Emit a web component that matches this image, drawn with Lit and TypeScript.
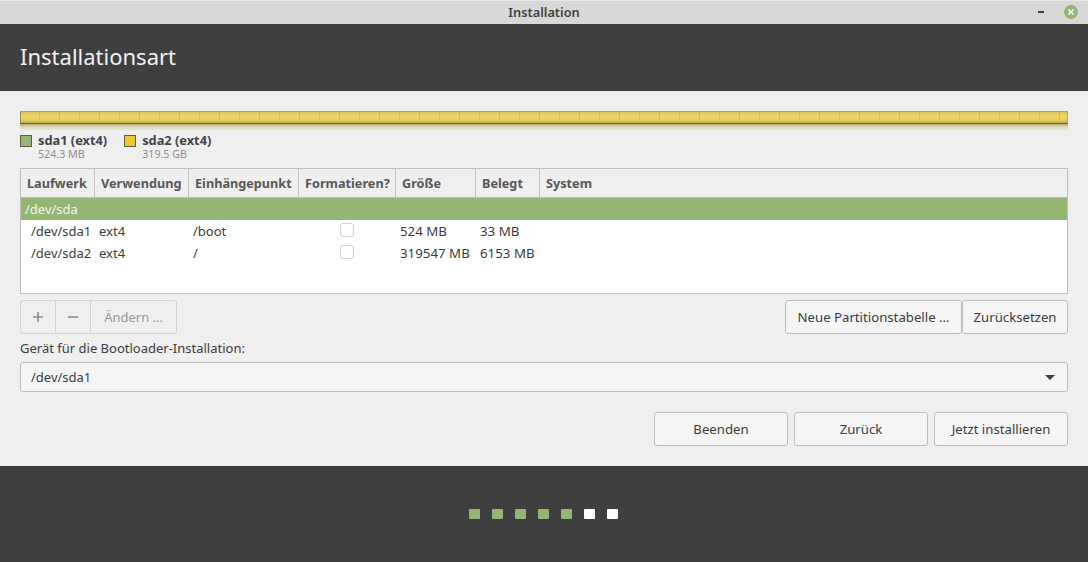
import { LitElement, html, css } from "lit";
import { customElement } from "lit/decorators.js";

const FONT = css`"Noto Sans", "Open Sans", sans-serif`;

@customElement("app-root")
export class AppRoot extends LitElement {
  static styles = css`
    :host { display: block; width: 1088px; height: 562px; overflow: hidden; font-family: ${FONT}; font-size: 13px; color: #3c3c3c; background: #efefef; }
    * { box-sizing: border-box; }
    .titlebar { height: 24px; background: #d8d8d8; border-top: 1px solid #e8e8e8; display: flex; align-items: center; justify-content: center; position: relative; font-weight: 600; font-size: 12.8px; color: #404040; padding-bottom: 1px; }
    .wm { position: absolute; top: 0; left: 0; right: 0; height: 23px; }
    .min { position: absolute; left: 1038px; top: 10px; width: 6px; height: 2px; background: #3f3f3f; }
    .close { position: absolute; left: 1064px; top: 4px; }
    .header { height: 67px; background: #3f3f3f; color: #f2f2f2; font-size: 22px; padding: 0 20px 3px; display: flex; align-items: center; }
    .main { height: 375px; padding: 20px 20px 0; display: flex; flex-direction: column; }
    .bar { height: 13px; border-top: 1px solid #b3a144; border-bottom: 1px solid #6f6428; border-right: 1px solid #b3a144; background-image: linear-gradient(90deg, #7f9a5e 0 1px, transparent 1px), repeating-linear-gradient(90deg, transparent 0 19px, #cfba58 19px 20px), linear-gradient(#dcc557, #efd768 45%, #e0c95c 80%, #bfa94a); }
    .reflect { height: 7px; background: linear-gradient(#b8aa68, #d9d4b0 35%, #efefef); }
    .legend { display: flex; gap: 17px; margin-top: 1px; }
    .lg { display: flex; gap: 6px; }
    .sw { width: 12px; height: 12px; border: 1px solid #5c5c4a; margin-top: 3px; }
    .sw.g { background: #95b574; }
    .sw.y { background: #edca2f; }
    .lg b { display: block; font-size: 12.8px; font-weight: 700; line-height: 16px; color: #3f4450; }
    .lg small { display: block; font-size: 10.7px; line-height: 13px; color: #8e8e8e; }
    .table { margin-top: 7px; height: 126px; background: #fff; border: 1px solid #bdbdbd; }
    .thead { display: flex; height: 29px; background: #efefef; border-bottom: 1px solid #bdbdbd; }
    .th { font-weight: 700; font-size: 12.7px; color: #57575a; padding-left: 6px; line-height: 29px; border-right: 1px solid #c4c4c4; white-space: nowrap; overflow: hidden; }
    .th:last-child { border-right: 0; flex: 1; }
    .group { height: 22px; background: #95b574; color: #f2f6ec; padding-left: 4px; line-height: 22px; }
    .row { position: relative; height: 22px; line-height: 22px; white-space: nowrap; }
    .cell { position: absolute; top: 0; }
    .num { font-size: 13.3px; }
    .check { position: absolute; left: 319px; top: 3px; width: 14px; height: 14px; border: 1px solid #d0d0d0; border-radius: 3px; background: #fff; }
    .actions { display: flex; margin-top: 6px; height: 34px; }
    .btn { height: 34px; border: 1px solid #bdbdbd; border-radius: 3px; background: #f5f5f5; display: flex; align-items: center; justify-content: center; color: #3c3c3c; white-space: nowrap; font-size: 13.2px; }
    .seg { display: flex; height: 34px; border: 1px solid #d3d3d3; border-radius: 3px; color: #999; }
    .seg div { display: flex; align-items: center; justify-content: center; border-right: 1px solid #d3d3d3; }
    .seg div:last-child { border-right: 0; }
    .seg svg { display: block; }
    .spacer { flex: 1; }
    .label { margin-top: 5px; line-height: 18px; color: #3c3c3c; }
    .combo { margin-top: 5px; height: 30px; border: 1px solid #bdbdbd; border-radius: 3px; background: #f5f5f5; display: flex; align-items: center; justify-content: space-between; padding: 0 12px 0 10px; }
    .bottom { display: flex; justify-content: flex-end; gap: 6px; margin-top: 20px; }
    .footer { height: 96px; background: #3f3f3f; display: flex; justify-content: center; gap: 12px; padding: 43px 1px 0 0; }
    .dot { width: 11px; height: 10px; border-radius: 1px; background: #95b574; }
    .dot.w { background: #fff; }
  `;

  render() {
    const cols: [string, number][] = [["Laufwerk", 74], ["Verwendung", 94], ["Einhängepunkt", 110], ["Formatieren?", 97], ["Größe", 80], ["Belegt", 64], ["System", 0]];
    const rows = [
      ["/dev/sda1", "ext4", "/boot", "524 MB", "33 MB"],
      ["/dev/sda2", "ext4", "/", "319547 MB", "6153 MB"],
    ];
    return html`
      <div class="titlebar">Installation
        <div class="wm">
          <div class="min"></div>
          <svg class="close" width="14" height="14" viewBox="0 0 14 14">
            <circle cx="7" cy="7" r="7" fill="#95b574"/>
            <path d="M4.5 4.5 9.5 9.5M9.5 4.5 4.5 9.5" stroke="#fff" stroke-width="1.6"/>
          </svg>
        </div>
      </div>
      <div class="header">Installationsart</div>
      <div class="main">
        <div class="bar"></div>
        <div class="reflect"></div>
        <div class="legend">
          <div class="lg"><div class="sw g"></div><div><b>sda1 (ext4)</b><small>524.3 MB</small></div></div>
          <div class="lg"><div class="sw y"></div><div><b>sda2 (ext4)</b><small>319.5 GB</small></div></div>
        </div>
        <div class="table">
          <div class="thead">
            ${cols.map(([t, w]) => html`<div class="th" style=${w ? `width:${w}px` : ""}>${t}</div>`)}
          </div>
          <div class="group">/dev/sda</div>
          ${rows.map((r) => html`<div class="row">
            <span class="cell" style="left:10px">${r[0]}</span>
            <span class="cell" style="left:78px">${r[1]}</span>
            <span class="cell" style="left:172px">${r[2]}</span>
            <span class="check"></span>
            <span class="cell num" style="left:379px">${r[3]}</span>
            <span class="cell num" style="left:459px">${r[4]}</span>
          </div>`)}
        </div>
        <div class="actions">
          <div class="seg">
            <div style="width:35px"><svg width="12" height="12" viewBox="0 0 12 12"><path d="M6 1v10M1 6h10" stroke="#8a8a8a" stroke-width="1.6"/></svg></div>
            <div style="width:35px"><svg width="12" height="12" viewBox="0 0 12 12"><path d="M1 6h10" stroke="#8a8a8a" stroke-width="1.6"/></svg></div>
            <div style="width:85px">Ändern …</div>
          </div>
          <div class="spacer"></div>
          <div class="btn" style="width:177px">Neue Partitionstabelle …</div>
          <div class="btn" style="width:106px">Zurücksetzen</div>
        </div>
        <div class="label">Gerät für die Bootloader-Installation:</div>
        <div class="combo">/dev/sda1
          <svg width="10" height="5" viewBox="0 0 10 5"><path d="M0 0h10L5 5z" fill="#3c3c3c"/></svg>
        </div>
        <div class="bottom">
          <div class="btn" style="width:134px">Beenden</div>
          <div class="btn" style="width:134px">Zurück</div>
          <div class="btn" style="width:134px">Jetzt installieren</div>
        </div>
      </div>
      <div class="footer">
        ${[0,1,2,3,4].map(() => html`<div class="dot"></div>`)}
        <div class="dot w"></div><div class="dot w"></div>
      </div>
    `;
  }
}
